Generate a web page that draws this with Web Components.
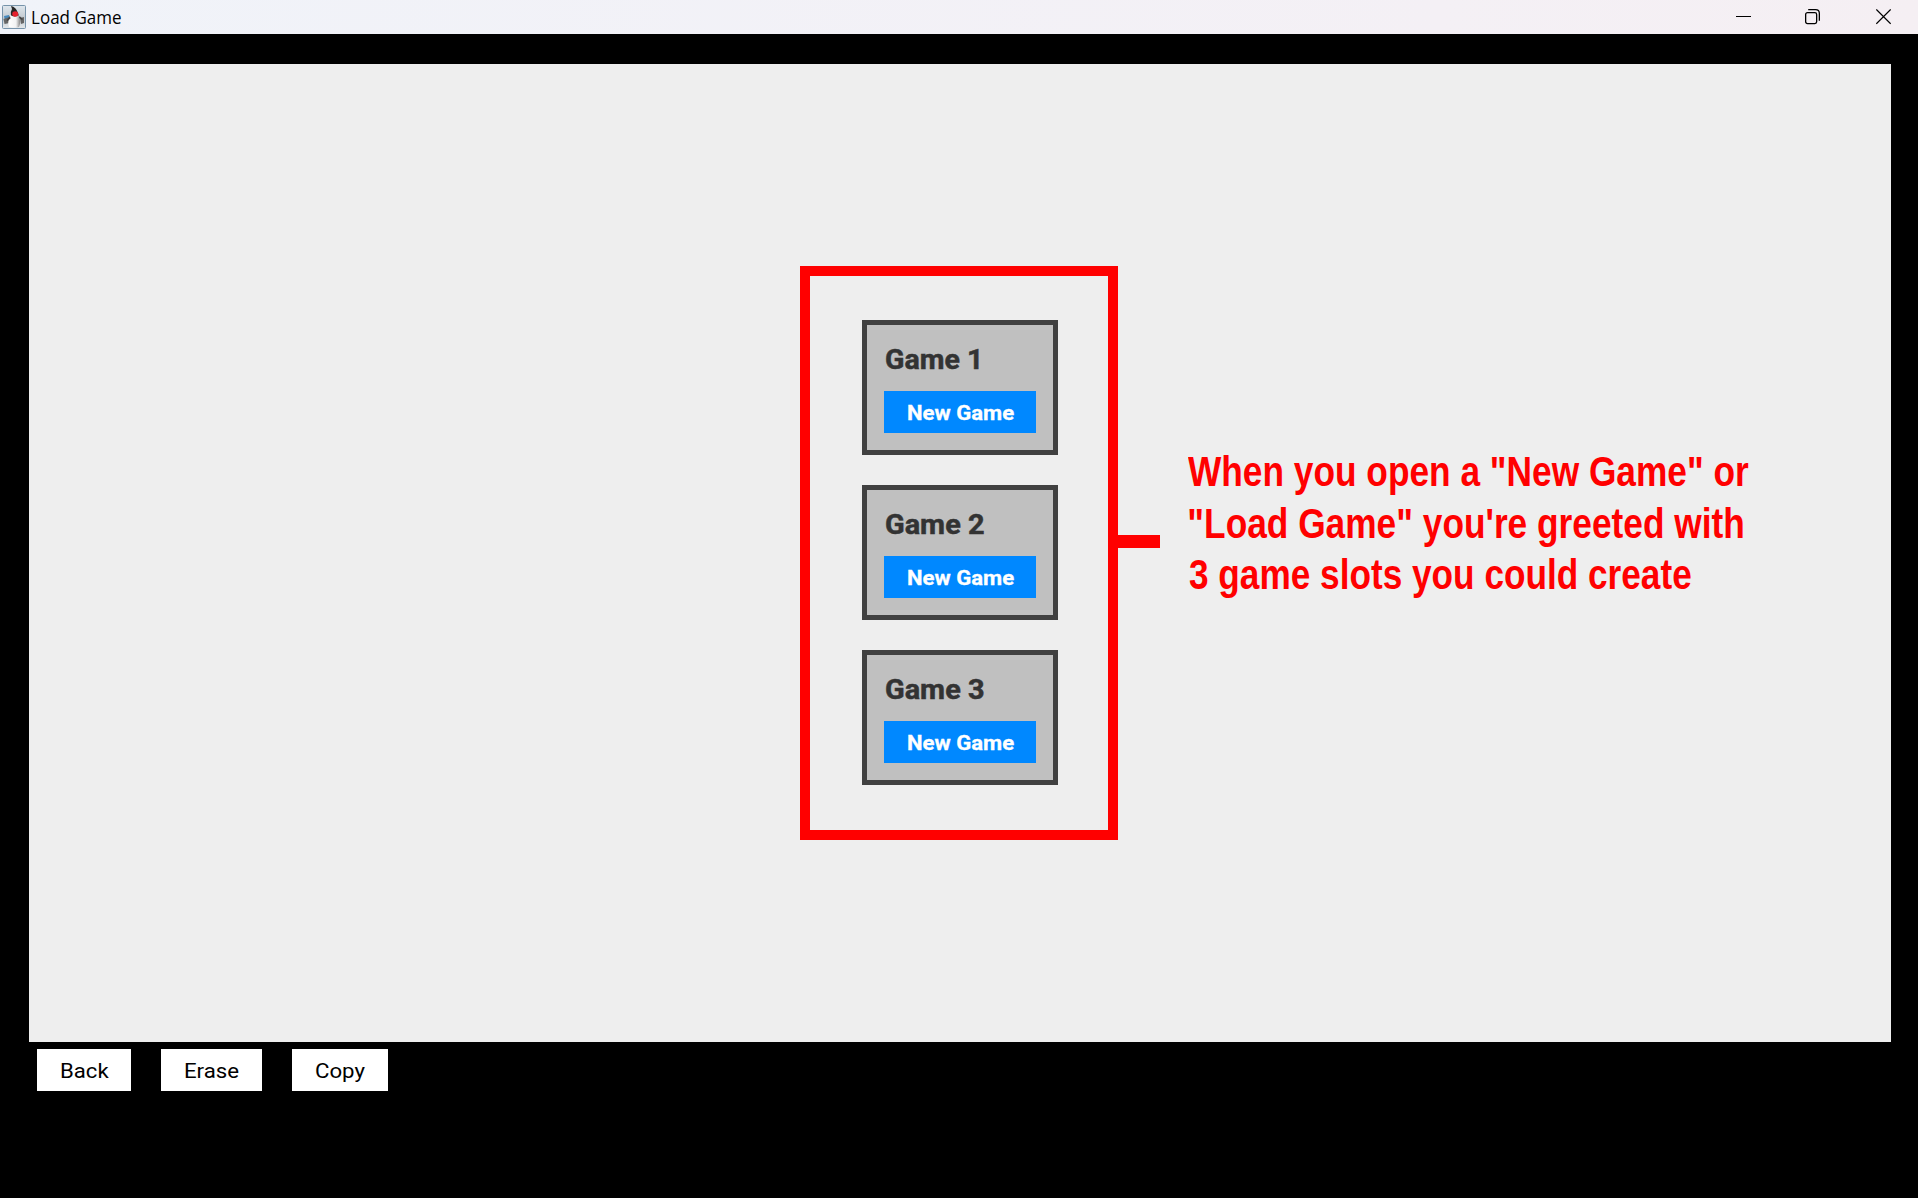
<!DOCTYPE html>
<html lang="en">
<head>
<meta charset="utf-8">
<title>Load Game</title>
<style>
html,body{margin:0;height:100%;overflow:hidden;background:#000}
</style>
</head>
<body>
<game-window></game-window>
<script>
const define = (name, html, setup) => customElements.define(name, class extends HTMLElement {
  connectedCallback() {
    if (this.shadowRoot) return;
    const root = this.attachShadow({mode: 'open'});
    const t = document.createElement('template');
    t.innerHTML = html;
    root.append(t.content.cloneNode(true));
    if (setup) setup(this, root);
  }
});

// A single text run whose inked width is stretched or condensed to the "ink" attribute.
define('text-run', `
<style>
:host{display:block;white-space:nowrap}
span{display:inline-block;transform-origin:0 50%}
</style><span><slot></slot></span>`, (host, root) => {
  const cs = getComputedStyle(host);
  const ctx = document.createElement('canvas').getContext('2d');
  ctx.font = cs.fontWeight + ' ' + cs.fontSize + ' ' + cs.fontFamily;
  const m = ctx.measureText(host.textContent);
  const ink = Number(host.getAttribute('ink'));
  const s = ink / (m.actualBoundingBoxLeft + m.actualBoundingBoxRight);
  host.style.width = ink + 'px';
  root.querySelector('span').style.transform =
    'translateX(' + (m.actualBoundingBoxLeft * s) + 'px) scaleX(' + s + ')';
});

define('title-bar', `
<style>
:host{display:flex;height:34px;box-sizing:border-box;align-items:center;justify-content:space-between;
background:linear-gradient(90deg,#f0f3f9,#f4f0f5 75%,#f5eff3);color:#000}
.l,.r{display:flex;align-items:center}
.l{padding-left:2px;gap:6px}
.l text-run{font:17.5px/24px "Open Sans",sans-serif}
.r{gap:54px;padding-right:27px}
.r svg:last-child{margin-left:2px}
svg{display:block}
</style>
<div class="l">
<svg width="24" height="24" viewBox="0 0 24 24">
<defs><linearGradient id="b" x2="0" y2="1"><stop offset="0" stop-color="#dfe7ee"/><stop offset=".55" stop-color="#c2c9cf"/><stop offset="1" stop-color="#e4e8eb"/></linearGradient>
<linearGradient id="w"><stop offset="0" stop-color="#fff"/><stop offset=".65" stop-color="#f2f2f2"/><stop offset="1" stop-color="#888"/></linearGradient></defs>
<rect x=".5" y=".5" width="23" height="23" rx="1" fill="url(#b)" stroke="#7693aa"/>
<path d="M2 11l5-1 1 4-5 2z" fill="#4689bd"/>
<path d="M1.5 14l6-2v6l-5 1z" fill="#666"/>
<path d="M18 13l4-1v6l-3 1z" fill="#666"/>
<path d="M9 1q5 1 7 7l1 3-4 1-4-1Q8 7 10 4z" fill="#272727"/>
<path d="M8.500 10Q5 17 7 22q5 1.500 10 0 2.500-5-.5-12-4 3-8 0z" fill="url(#w)"/>
<path d="M8 11l-3.500 4 1 1 3-2.500zM17.500 11l3.500 3-1 1-3-2z" fill="#444"/>
<ellipse cx="13.200" cy="9" rx="3" ry="2.700" fill="#e5212d"/>
</svg>
<text-run ink="88.7">Load Game</text-run>
</div>
<div class="r">
<svg width="15" height="16" viewBox="0 0 15 16"><path d="M0 7.500h15" stroke="#000"/></svg>
<svg width="15" height="16" viewBox="0 0 15 16" fill="none" stroke="#000" stroke-width="1.300"><rect x=".65" y="3.650" width="11" height="11" rx="1.800"/><path d="M3.200.650h7.400q3.750 0 3.750 3.800v7.400"/></svg>
<svg width="15" height="16" viewBox="0 0 15 16"><path d="M.3.5l14.400 14.400M14.700.5L.3 14.900" stroke="#000" stroke-width="1.300"/></svg>
</div>`);

define('flat-button', `
<style>
:host{display:flex;align-items:center;justify-content:center;height:42px;box-sizing:border-box;
padding-top:2px;background:#fff;color:#000;font:21px/40px Roboto,sans-serif}
:host([primary]){background:#0088ff;color:#fff;font-weight:700;font-size:20.5px;padding-left:2px;-webkit-text-stroke:.3px #fff}
</style><slot></slot>`);

define('game-slot', `
<style>
:host{display:flex;flex-direction:column;box-sizing:border-box;width:196px;height:135px;
border:5px solid #404040;background:#c0c0c0;padding:20px 17px 17px}
.t{font:700 27px/30px Roboto,sans-serif;color:#333;height:30px;padding-left:2px;margin-bottom:16px;-webkit-text-stroke:.5px #333}
flat-button{width:152px}
</style>
<div class="t"><slot></slot></div>
<flat-button primary><text-run ink="106">New Game</text-run></flat-button>`);

define('call-out', `
<style>
:host{display:flex;align-items:flex-start;color:#f00}
.frame{box-sizing:border-box;width:318px;height:574px;border:10px solid #f00;padding:44px 0 0 52px;
display:flex;flex-direction:column;gap:30px}
.arm{width:42px;height:13px;background:#f00;margin-top:269px}
.note{margin:180.200px 0 0 28px;font:700 43px/51.600px "Liberation Sans",Arial,sans-serif}
.note ::slotted(*){display:block}
</style>
<div class="frame"><slot></slot></div><div class="arm"></div>
<div class="note"><slot name="note"></slot></div>`);

define('game-window', `
<style>
:host{display:flex;flex-direction:column;height:1198px;width:1918px;background:#000}
main{display:flex;box-sizing:border-box;margin:30px 27px 0 29px;height:978px;background:#eee;padding:202px 0 0 771px}
footer{display:flex;gap:30px;padding:7px 0 0 37px}
</style>
<title-bar></title-bar>
<main>
<call-out>
<game-slot><text-run ink="92.5">Game 1</text-run></game-slot>
<game-slot><text-run ink="98">Game 2</text-run></game-slot>
<game-slot><text-run ink="98">Game 3</text-run></game-slot>
<text-run slot="note" ink="561">When you open a "New Game" or</text-run>
<text-run slot="note" ink="554" style="padding-left:1px">"Load Game" you're greeted with</text-run>
<text-run slot="note" ink="502" style="padding-left:1px">3 game slots you could create</text-run>
</call-out>
</main>
<footer>
<flat-button style="width:94px;padding-left:2px"><text-run ink="48">Back</text-run></flat-button>
<flat-button style="width:101px"><text-run ink="54">Erase</text-run></flat-button>
<flat-button style="width:96px"><text-run ink="49">Copy</text-run></flat-button>
</footer>`);
</script>
</body>
</html>
